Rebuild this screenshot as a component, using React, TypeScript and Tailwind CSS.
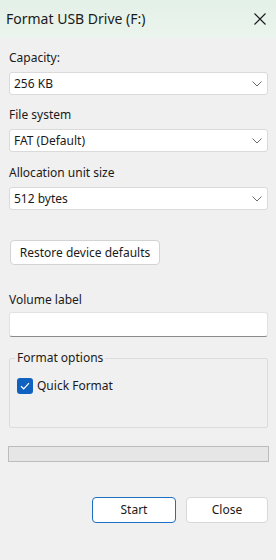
import React from "react";

const font = { fontFamily: '"Noto Sans", "Open Sans", sans-serif' };

function Chevron() {
  return (
    <svg width="10" height="6" viewBox="0 0 10 6" className="shrink-0">
      <path d="M0.5 0.5 L5 5 L9.5 0.5" fill="none" stroke="#6b6b6b" strokeWidth="1" />
    </svg>
  );
}

function Combo({ value }: { value: string }) {
  return (
    <div className="mt-[6px] h-[23px] w-full rounded-[3px] border border-[#dadada] bg-white flex items-center pl-[4px] pr-[5px] justify-between">
      <span className="text-[12px] leading-none text-[#1a1a1a]">{value}</span>
      <Chevron />
    </div>
  );
}

function Label({ children, className = "" }: { children: React.ReactNode; className?: string }) {
  return <div className={`text-[12px] leading-[16px] text-[#1a1a1a] ${className}`}>{children}</div>;
}

export default function App() {
  return (
    <div className="w-[276px] h-[560px] bg-[#f0f0f0] flex flex-col" style={font}>
      <div className="h-[38px] shrink-0 flex items-center justify-between pl-[6px] pr-[10px] bg-gradient-to-b from-[#e4f1e7] to-[#ebf4ee]">
        <span className="text-[14px] leading-none text-[#1a1a1a]">Format USB Drive (F:)</span>
        <svg width="12" height="12" viewBox="0 0 12 12">
          <path d="M0.5 0.5 L11.5 11.5 M11.5 0.5 L0.5 11.5" stroke="#1a1a1a" strokeWidth="1.1" />
        </svg>
      </div>
      <div className="flex flex-col pl-[9px] pr-[8px]">
        <Label className="mt-[12px]">Capacity:</Label>
        <Combo value="256 KB" />
        <Label className="mt-[12px]">File system</Label>
        <Combo value="FAT (Default)" />
        <Label className="mt-[13px]">Allocation unit size</Label>
        <Combo value="512 bytes" />
        <button className="mt-[30px] ml-[1px] h-[25px] w-[150px] rounded-[4px] border border-[#d3d3d3] bg-white text-[12px] text-[#1a1a1a] flex items-center justify-center">
          Restore device defaults
        </button>
        <Label className="mt-[27px]">Volume label</Label>
        <div className="mt-[4px] h-[25px] w-full rounded-[3px] border border-[#e2e2e2] border-b-[#8a8a8a] bg-white" />
        <div className="relative mt-[21px] h-[70px] w-full rounded-[2px] border border-[#dcdcdc]">
          <span className="absolute left-[5px] top-[-9px] bg-[#f0f0f0] px-[2px] text-[12px] leading-[16px] text-[#1a1a1a]">
            Format options
          </span>
          <div className="mt-[19px] ml-[7px] flex items-center gap-[4px]">
            <div className="h-[16px] w-[16px] rounded-[3px] bg-[#0f62c0] flex items-center justify-center">
              <svg width="10" height="8" viewBox="0 0 10 8">
                <path d="M1 4.2 L3.7 6.8 L9 1.2" fill="none" stroke="white" strokeWidth="1.2" />
              </svg>
            </div>
            <span className="text-[12px] leading-[16px] text-[#1a1a1a]">Quick Format</span>
          </div>
        </div>
        <div className="mt-[18px] -ml-[1px] h-[16px] w-[261px] border border-[#bcbcbc] bg-[#e6e6e6]" />
        <div className="mt-[35px] flex justify-end gap-[10px]">
          <button className="h-[26px] w-[84px] rounded-[4px] border border-[#1c6fc2] bg-white text-[12px] text-[#1a1a1a] flex items-center justify-center">
            Start
          </button>
          <button className="h-[26px] w-[82px] rounded-[4px] border border-[#d8d8d8] bg-white text-[12px] text-[#1a1a1a] flex items-center justify-center">
            Close
          </button>
        </div>
      </div>
    </div>
  );
}
